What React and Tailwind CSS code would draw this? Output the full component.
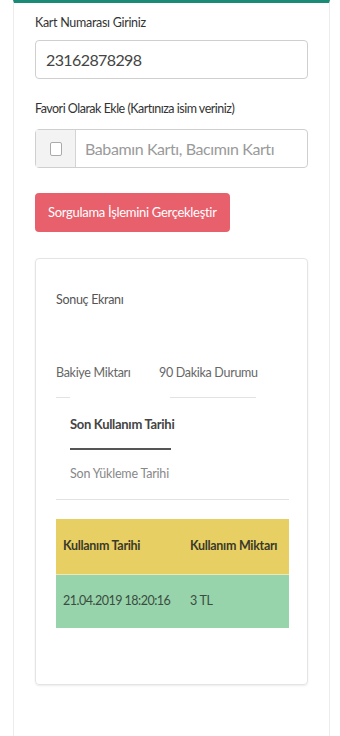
import React from 'react';

const font = { fontFamily: 'Lato, "Liberation Sans", Arial, sans-serif' };

export default function App() {
  return (
    <div className="min-h-[736px] whitespace-nowrap bg-white pl-[13px] pr-[10px]" style={font}>
      <div className="min-h-[736px] border-x border-[#ececec] border-t-[3px] border-t-[#1b8a76]">
        <div className="pl-[21px] pr-[21px] pt-[10px]">
          {/* kart numarası */}
          <label className="block h-[20px] text-[12.5px] leading-[20px] tracking-[-0.3px] text-[#333]">Kart Numarası Giriniz</label>
          <div className="mt-[7px] flex h-[39px] items-center rounded-[4px] border border-[#cfcfcf] px-[10px] text-[16px] tracking-[-0.6px] text-[#444]">
            23162878298
          </div>

          <label className="mt-[20px] block h-[20px] text-[12.5px] leading-[20px] tracking-[-0.5px] text-[#333]">
            Favori Olarak Ekle (Kartınıza isim veriniz)
          </label>
          <div className="mt-[10px] flex h-[39px] rounded-[4px] border border-[#cfcfcf]">
            <div className="flex w-[40px] items-center justify-center border-r border-[#d4d4d4] bg-[#f3f3f3]">
              <div className="h-[14px] w-[12px] rounded-[2px] border border-[#aaa] bg-white" />
            </div>
            <div className="flex items-center pl-[9px] text-[16px] tracking-[-0.4px] text-[#9a9a9a]">Babamın Kartı, Bacımın Kartı</div>
          </div>

          <button className="mt-[25px] flex h-[39px] items-center rounded-[4px] bg-[#e8606c] px-[13px] text-[13px] tracking-[-0.3px] text-white">
            Sorgulama İşlemini Gerçekleştir
          </button>

          {/* sonuç kartı */}
          <div className="mt-[26px] h-[427px] rounded-[4px] border border-[#e4e4e4] px-[20px] pt-[31px] shadow-[0_1px_2px_rgba(0,0,0,0.08)]">
            <div className="h-[20px] text-[12.5px] leading-[20px] tracking-[-0.3px] text-[#555]">Sonuç Ekranı</div>

            <div className="mt-[53px] flex h-[20px] text-[12.5px] leading-[20px] tracking-[-0.3px] text-[#666]">
              <span className="w-[103px]">Bakiye Miktarı</span>
              <span>90 Dakika Durumu</span>
            </div>
            <div className="mt-[14px] flex h-px">
              <div className="w-[14px] bg-[#e2e2e2]" />
              <div className="ml-[100px] w-[86px] bg-[#e2e2e2]" />
            </div>

            <div className="ml-[14px] w-[101px]">
              <div className="mt-[16px] h-[20px] text-[13px] font-bold leading-[20px] tracking-[-0.3px] text-[#444]">Son Kullanım Tarihi</div>
              <div className="mt-[14px] h-[2px] bg-[#555]" />
              <div className="mt-[14px] h-[20px] text-[12.5px] leading-[20px] tracking-[-0.2px] text-[#888]">Son Yükleme Tarihi</div>
            </div>
            <div className="mt-[15px] h-px w-[233px] bg-[#e2e2e2]" />

            <div className="mt-[19px] w-[233px] text-[12.5px] tracking-[-0.3px]">
              <div className="flex h-[55px] items-center bg-[#e8cf63] font-bold text-[#3a3a2a]">
                <span className="w-[134px] pl-[7px]">Kullanım Tarihi</span>
                <span>Kullanım Miktarı</span>
              </div>
              <div className="flex h-[54px] items-center border-t border-[#f0e6b8] bg-[#97d3ab] text-[#3b4d40]">
                <span className="w-[134px] pl-[7px] tracking-[-0.5px]">21.04.2019 18:20:16</span>
                <span>3 TL</span>
              </div>
            </div>
          </div>
        </div>
      </div>
    </div>
  );
}
